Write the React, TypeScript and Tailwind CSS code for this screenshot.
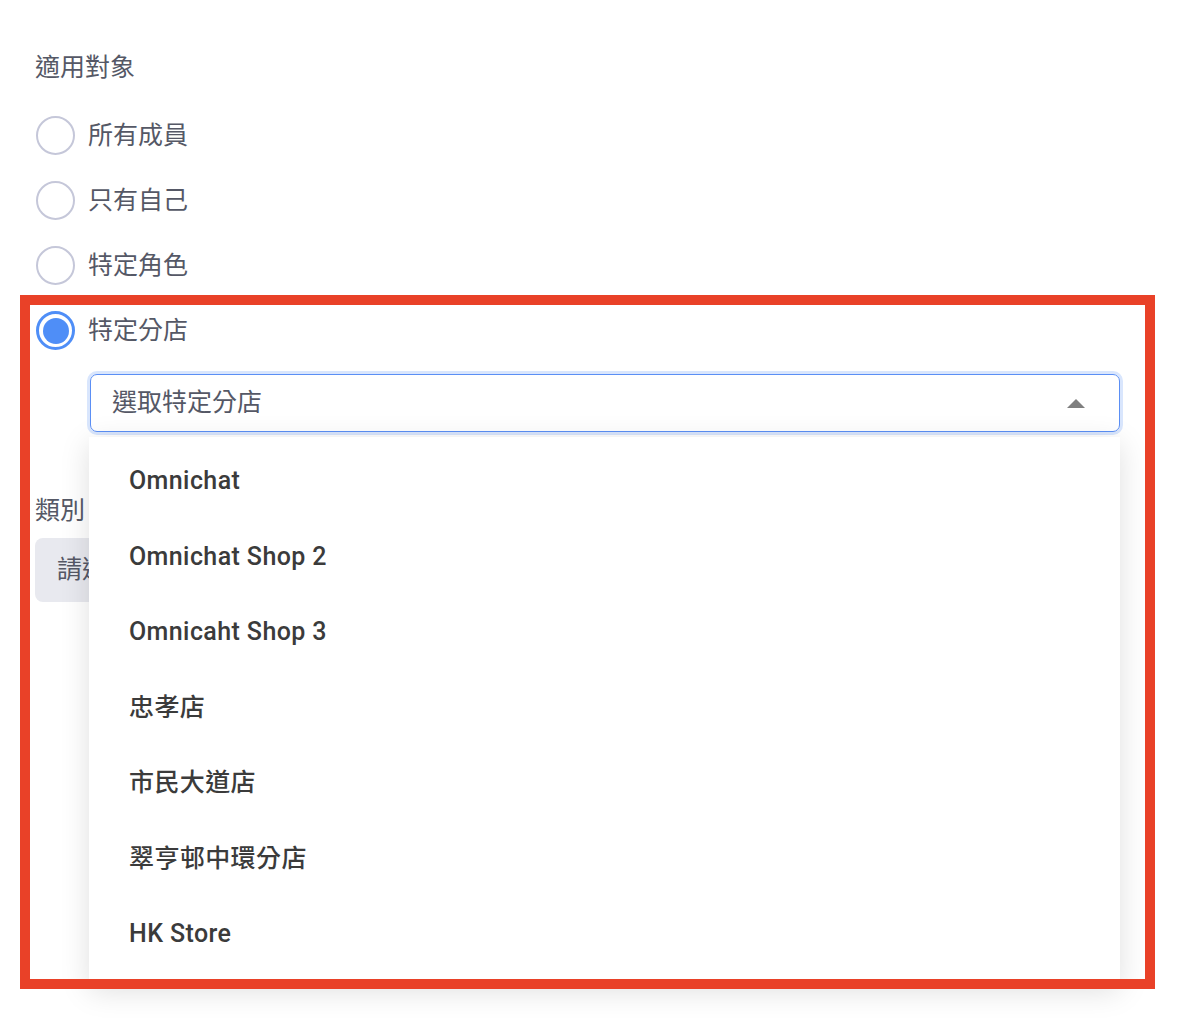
import { useState } from "react";

const options = ["所有成員", "只有自己", "特定角色", "特定分店"];
const stores = [
  "Omnichat",
  "Omnichat Shop 2",
  "Omnicaht Shop 3",
  "忠孝店",
  "市民大道店",
  "翠亨邨中環分店",
  "HK Store",
];

function Radio({ checked }: { checked: boolean }) {
  if (checked) {
    return (
      <span className="ml-px flex h-[39px] w-[39px] items-center justify-center rounded-full border-[3px] border-[#4f8ef7] bg-white">
        <span className="h-[26px] w-[26px] rounded-full bg-[#4f8ef7]" />
      </span>
    );
  }
  return (
    <span className="ml-px h-[39px] w-[39px] rounded-full border-[2.5px] border-[#c5c7d9] bg-white" />
  );
}

export default function App() {
  const [selected, setSelected] = useState(3);

  return (
    <div
      className="relative h-[1024px] w-full overflow-hidden bg-white"
      style={{ fontFamily: 'Roboto, "Noto Sans CJK TC", sans-serif' }}
    >
      <div className="px-[35px] pt-[52px]">
        <h2 className="h-[32px] text-[25px] leading-[32px] text-[#555866]">適用對象</h2>

        {/* 單選列表 */}
        <div className="mt-[19px] flex flex-col">
          {options.map((label, i) => (
            <button
              key={label}
              onClick={() => setSelected(i)}
              className="flex h-[65px] items-center gap-[13px] text-left"
            >
              <Radio checked={selected === i} />
              <span className="text-[25px] leading-[32px] text-[#555866]">{label}</span>
            </button>
          ))}
        </div>

        {/* 下拉選單 */}
        <div className="ml-[55px] mt-[11px] w-[1030px] rounded-[7px] shadow-[0_0_0_3px_#d9e6fd]">
          <div className="flex h-[58px] items-center justify-between rounded-[7px] border border-[#5b8ff5] bg-white pl-[21px] pr-[34px]">
            <span className="text-[25px] leading-[32px] text-[#555866]">選取特定分店</span>
            <span className="h-0 w-0 border-x-[9px] border-b-[9px] border-x-transparent border-b-[#7f7f7f]" />
          </div>
        </div>

        <div className="mt-[63px] h-[32px] text-[25px] leading-[32px] text-[#555866]">類別</div>
        <div className="mt-[11px] flex h-[64px] w-[1085px] items-center rounded-[8px] bg-[#e8e9ef] pl-[22px]">
          <span className="text-[25px] leading-[32px] text-[#555866]">請選擇類別</span>
        </div>
      </div>

      {/* 展開的選項 */}
      <ul className="absolute left-[89px] top-[437px] h-[548px] w-[1031px] bg-white pt-[6px] shadow-[0_6px_28px_rgba(0,0,0,0.13)]">
        {stores.map((s) => (
          <li
            key={s}
            className="flex h-[75.5px] items-center pl-[40px] text-[25px] font-medium tracking-[0.4px] text-[#3b3b3b]"
          >
            {s}
          </li>
        ))}
      </ul>

      {/* 標註框 */}
      <div className="pointer-events-none absolute left-[20px] top-[295px] h-[694px] w-[1135px] border-[10px] border-[#e94128]" />
    </div>
  );
}
